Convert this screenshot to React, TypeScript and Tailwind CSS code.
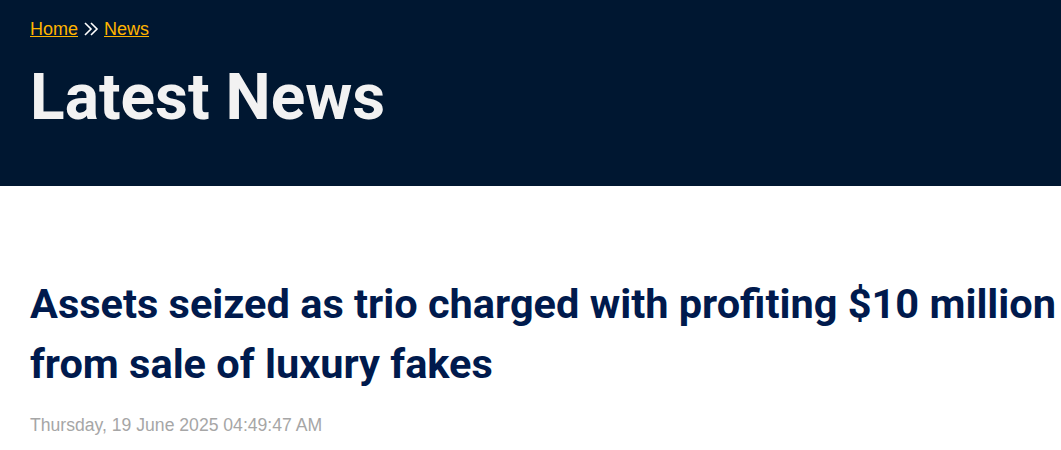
export default function App() {
  return (
    <div className="min-h-[450px] bg-white">
      <header className="h-[186px] bg-[#001731] px-[30px] pt-[18px] font-['Liberation_Sans',Arial,sans-serif]">
        <nav className="flex items-center text-[18px] leading-[22px]">
          <a href="#" className="text-[#ffb400] underline">Home</a>
          <svg width="16" height="14" viewBox="0 0 16 14" className="mx-[5px]" fill="none" stroke="#ffffff" strokeWidth="1.6">
            <path d="M2 1l6 6-6 6" />
            <path d="M8 1l6 6-6 6" />
          </svg>
          <a href="#" className="text-[#ffb400] underline">News</a>
        </nav>
        <h1 className="mt-[20px] font-['Roboto',sans-serif] text-[64px] font-bold leading-[76px] text-[#f2f2f2]">Latest News</h1>
      </header>

      <main className="px-[30px] pt-[88px]">
        <h2 className="font-['Roboto',sans-serif] text-[41.5px] font-bold leading-[60px] text-[#001a4d] whitespace-nowrap">
          Assets seized as trio charged with profiting $10 million
          <br />
          from sale of luxury fakes
        </h2>
        <p className="mt-[18px] font-['Liberation_Sans',Arial,sans-serif] text-[17.6px] text-[#a6a6a6]">
          Thursday, 19 June 2025 04:49:47 AM
        </p>
      </main>
    </div>
  );
}
